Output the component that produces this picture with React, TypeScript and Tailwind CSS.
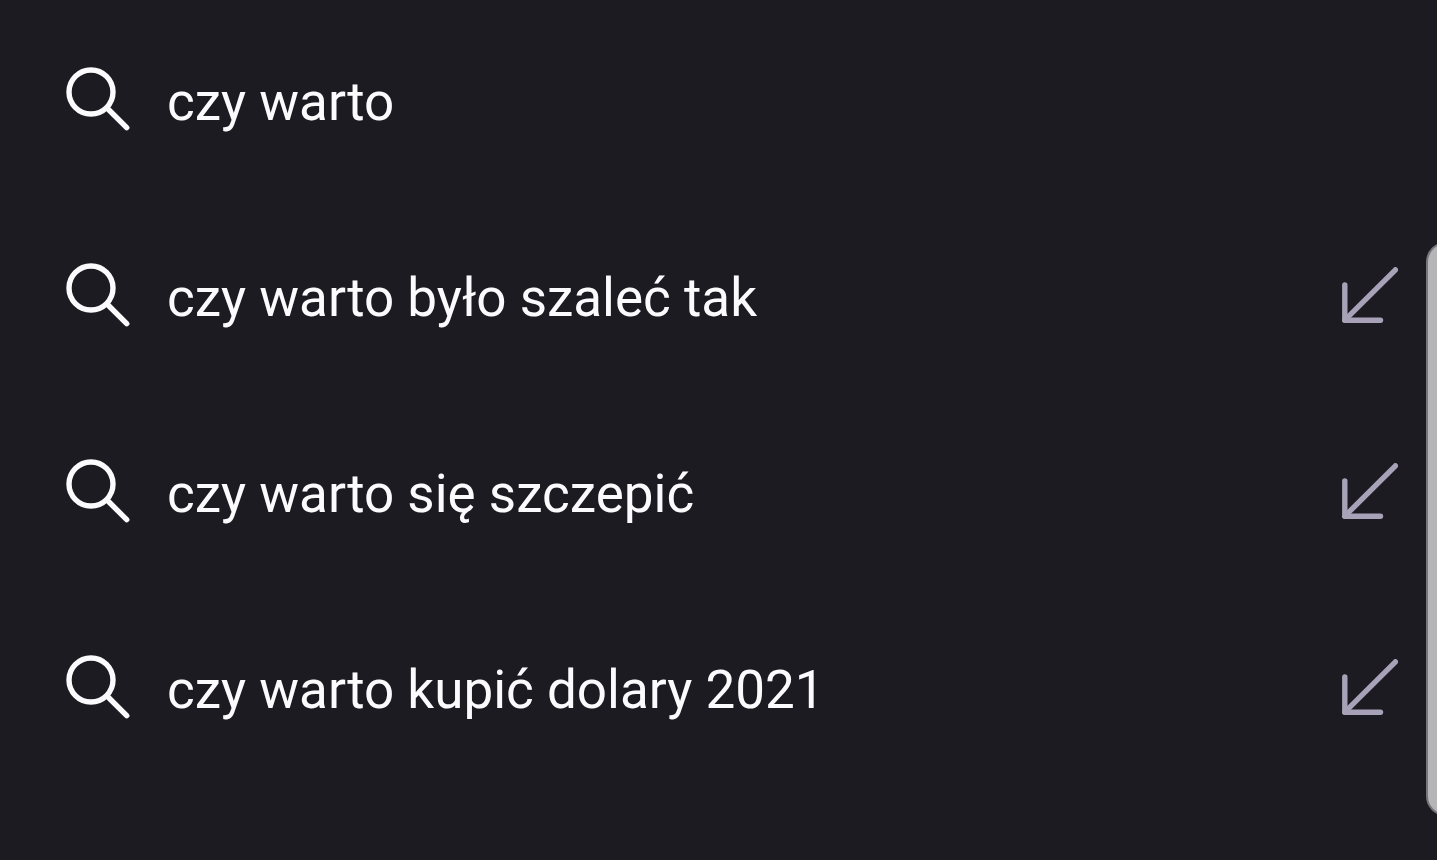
import { useState } from 'react';

const initialSuggestions = [
    { id: 1, text: 'czy warto', canInsert: false },
    { id: 2, text: 'czy warto było szaleć tak', canInsert: true },
    { id: 3, text: 'czy warto się szczepić', canInsert: true },
    { id: 4, text: 'czy warto kupić dolary 2021', canInsert: true },
];

function SearchIcon() {
    return (
        <svg viewBox="0 0 64 64" className="size-16 shrink-0" fill="none" stroke="currentColor" strokeWidth="5.4" strokeLinecap="round" aria-hidden="true">
            <circle cx="25" cy="25" r="22" />
            <path d="M41.5 41.5 60.7 60.7" />
        </svg>
    );
}

function InsertIcon() {
    return (
        <svg viewBox="0 0 56 56" className="size-14" fill="none" stroke="currentColor" strokeWidth="5.4" strokeLinecap="round" strokeLinejoin="round" aria-hidden="true">
            <path d="M2.8 18v35.2H38.5" />
            <path d="M2.8 53.2 53.4 2.8" />
        </svg>
    );
}

export default function App() {
    const [selected, setSelected] = useState('');

    return (
        <main className="relative min-h-screen overflow-hidden bg-[#1d1b22] font-[Roboto,sans-serif] text-[#fbfbfe]">
            <ul className="pt-px" data-selected={selected}>
                {initialSuggestions.map((item) => (
                    <li key={item.id} className="flex h-49 items-center pr-[39px] pl-[66px]">
                        <button
                            type="button"
                            onClick={() => setSelected(item.text)}
                            className="flex flex-1 items-center gap-[37px] text-left text-[53px] leading-16"
                        >
                            <SearchIcon />
                            <span className="pt-1.5">{item.text}</span>
                        </button>
                        {item.canInsert && (
                            <button
                                type="button"
                                aria-label={`Wstaw: ${item.text}`}
                                onClick={() => setSelected(item.text)}
                                className="text-[#a7a2b7]"
                            >
                                <InsertIcon />
                            </button>
                        )}
                    </li>
                ))}
            </ul>

            {/* Uchwyt panelu krawędziowego */}
            <div className="absolute top-[242px] -right-10 h-[574px] w-[51px] rounded-[20px] border-2 border-[#77767a] bg-[#b5b5b7]" />
        </main>
    );
}
